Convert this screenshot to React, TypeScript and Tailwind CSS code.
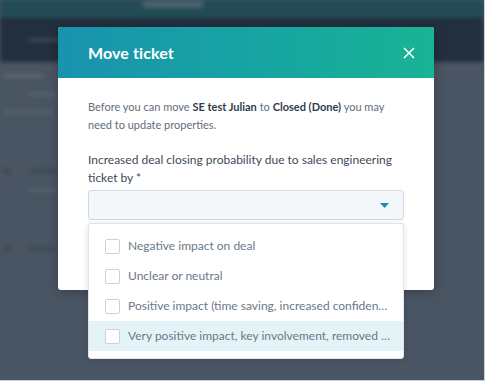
import { X } from "lucide-react";

const options = [
    "Negative impact on deal",
    "Unclear or neutral",
    "Positive impact (time saving, increased confidence in the solution)",
    "Very positive impact, key involvement, removed risks",
];

const App = () => {
    return (
        <div
            className="relative w-[485px] h-[381px] overflow-hidden bg-[#4a5563] border-r border-b border-[#c9cfd6]"
            style={{ fontFamily: "Lato, 'Open Sans', sans-serif" }}
        >
            {/* Blurred page behind */}
            <div className="flex flex-col blur-[2px]">
                <div className="h-[18px] bg-[#214b55] flex">
                    <div className="ml-[142px] mt-[1px] w-[62px] h-[7px] bg-[#4b626e] rounded" />
                </div>
                <div className="h-[44px] bg-[#232f3f] flex items-center">
                    <div className="ml-[28px] w-[40px] h-[4px] bg-[#3a4656] rounded" />
                </div>
                <div className="flex flex-col gap-[14px] pt-[12px] pl-[4px]">
                    <div className="w-[40px] h-[4px] bg-[#5a6473] rounded" />
                    <div className="ml-[24px] w-[30px] h-[4px] bg-[#56616f] rounded" />
                    <div className="w-[50px] h-[4px] bg-[#55606e] rounded" />
                    <div className="mt-[40px] flex gap-[18px] items-center">
                        <div className="w-[6px] h-[6px] bg-[#3c4756] rounded-full" />
                        <div className="w-[28px] h-[4px] bg-[#3e4958] rounded" />
                    </div>
                    <div className="ml-[24px] w-[30px] h-[4px] bg-[#55606e] rounded" />
                    <div className="mt-[40px] flex gap-[18px] items-center">
                        <div className="w-[6px] h-[6px] bg-[#3c4756] rounded-full" />
                        <div className="w-[28px] h-[4px] bg-[#3e4958] rounded" />
                    </div>
                </div>
            </div>

            {/* Modal */}
            <div className="absolute left-[58px] top-[27px] w-[376px] h-[263px] bg-white rounded-[3px] shadow-[0_2px_12px_rgba(0,0,0,0.25)]">
                <div className="h-[51px] rounded-t-[3px] bg-gradient-to-r from-[#1993ae] to-[#19b395] flex items-center justify-between pl-[30px] pr-[16px]">
                    <span className="text-white text-[16px] font-bold tracking-[0.1px]">
                        Move ticket
                    </span>
                    <X className="w-[18px] h-[18px] text-white" strokeWidth={2.2} />
                </div>

                <div className="px-[30px] pt-[20px]">
                    <p className="text-[11px] leading-[18px] text-[#5f6d7b]">
                        Before you can move{" "}
                        <span className="font-bold text-[#2f3d4c]">SE test Julian</span>{" "}
                        to{" "}
                        <span className="font-bold text-[#2f3d4c]">Closed (Done)</span>{" "}
                        you may need to update properties.
                    </p>

                    <p className="mt-[17px] text-[12px] leading-[18px] text-[#3c4a59]">
                        Increased deal closing probability due to sales engineering ticket by *
                    </p>

                    <div className="relative mt-[3px]">
                        <div className="h-[30px] bg-[#f5f8fa] border border-[#cfd9e3] rounded-[3px] flex items-center justify-end pr-[14px]">
                            <svg width="9" height="5" viewBox="0 0 9 5">
                                <path d="M0 0 L9 0 L4.5 5 Z" fill="#0a93ad" />
                            </svg>
                        </div>

                        {/* Dropdown menu */}
                        <div className="absolute left-0 top-[33px] w-full bg-white border border-[#dfe5ec] rounded-[3px] shadow-[0_1px_6px_rgba(0,0,0,0.12)] pt-[7px] pb-[7px]">
                            {options.map((o, i) => (
                                <div
                                    key={o}
                                    className={
                                        i === 3
                                            ? "h-[30px] flex items-center pl-[16px] pr-[12px] gap-[8px] bg-[#e3f3f7]"
                                            : "h-[30px] flex items-center pl-[16px] pr-[12px] gap-[8px]"
                                    }
                                >
                                    <div className="w-[15px] h-[15px] shrink-0 border-[1.5px] border-[#c7d3df] rounded-[2px] bg-white" />
                                    <span className="truncate text-[12px] text-[#6b7886]">{o}</span>
                                </div>
                            ))}
                        </div>
                    </div>
                </div>
            </div>
        </div>
    );
};

export default App;
